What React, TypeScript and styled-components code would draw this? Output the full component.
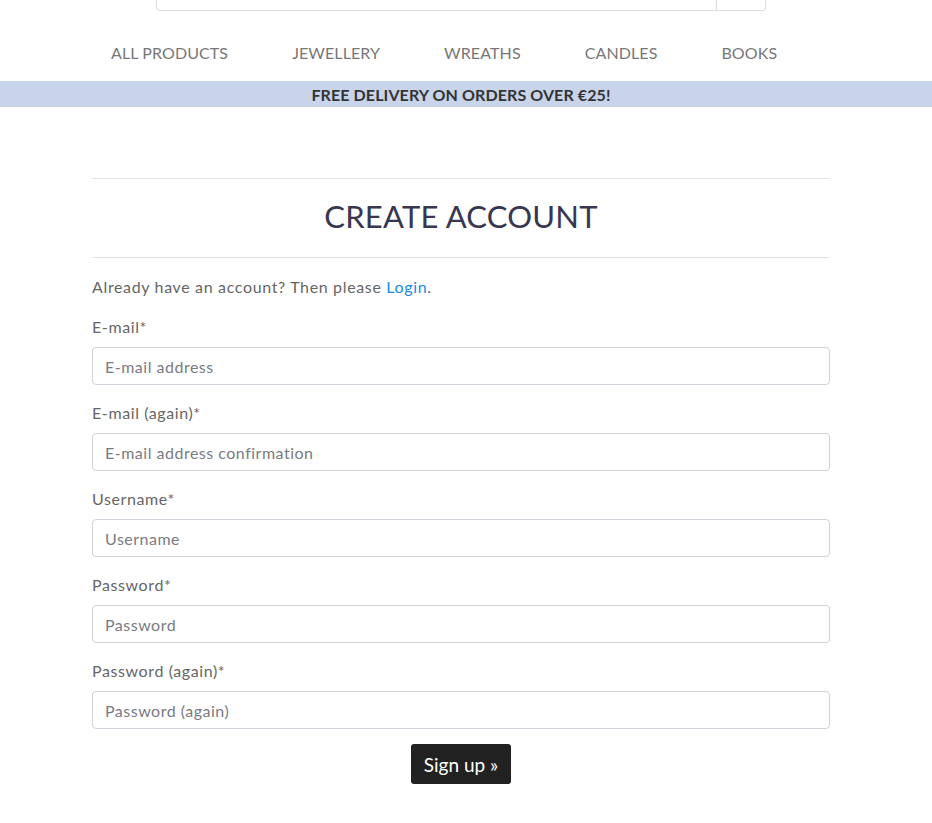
import React from "react";
import styled, { createGlobalStyle } from "styled-components";

const Global = createGlobalStyle`
  html, body { margin: 0; padding: 0; background: #fff; }
  body { font-family: Lato, "Noto Sans", sans-serif; color: #555; }
  * { box-sizing: border-box; }
`;

const Header = styled.header`
  display: flex;
  flex-direction: column;
`;

const SearchViewport = styled.div`
  height: 11px;
  overflow: hidden;
  display: flex;
  align-items: flex-end;
  padding-left: 156px;
`;

const SearchInput = styled.div`
  width: 561px;
  height: 38px;
  border: 1px solid #dcdcdc;
  border-radius: 4px 0 0 4px;
`;

const SearchButton = styled.div`
  width: 49px;
  height: 38px;
  border: 1px solid #dcdcdc;
  border-left: none;
  border-radius: 0 4px 4px 0;
`;

const Nav = styled.nav`
  display: flex;
  height: 70px;
  align-items: center;
  padding-left: 79px;
`;

const NavItem = styled.a`
  padding: 0 32px;
  font-size: 16px;
  letter-spacing: 0.1px;
  color: #777;
  text-transform: uppercase;
  text-decoration: none;
  line-height: 1;
  margin-top: 13px;
`;

const Banner = styled.div`
  height: 26px;
  background: #c8d4ea;
  display: flex;
  align-items: center;
  justify-content: center;
  padding-right: 10px;
  font-size: 16px;
  font-weight: 700;
  color: #333;
  letter-spacing: 0.1px;
`;

const Main = styled.main`
  width: 738px;
  margin: 0 0 0 92px;
  padding-top: 71px;
  display: flex;
  flex-direction: column;
`;

const Rule = styled.hr`
  border: none;
  border-top: 1px solid #e3e3e3;
  margin: 0;
`;

const Title = styled.h1`
  margin: 0;
  height: 78px;
  padding-bottom: 5px;
  display: flex;
  align-items: center;
  justify-content: center;
  font-size: 31px;
  font-weight: 400;
  color: #393651;
  letter-spacing: 0.2px;
`;

const Intro = styled.p`
  margin: 19px 0 0;
  font-size: 16px;
  line-height: 20px;
  color: #666;
  letter-spacing: 0.65px;
`;

const LoginLink = styled.a`
  color: #1e88e5;
  text-decoration: none;
`;

const Form = styled.form`
  display: flex;
  flex-direction: column;
  margin-top: 20px;
`;

const Field = styled.div`
  display: flex;
  flex-direction: column;
  margin-bottom: 18px;
`;

const Label = styled.label`
  font-size: 16px;
  line-height: 20px;
  color: #666;
  margin-bottom: 10px;
  letter-spacing: 0.6px;
`;

const Input = styled.input`
  height: 38px;
  width: 100%;
  border: 1px solid #ced4da;
  border-radius: 4px;
  padding: 0 12px;
  font-family: Lato, "Noto Sans", sans-serif;
  font-size: 16px;
  letter-spacing: 0.5px;
  color: #555;
  &::placeholder { color: #7a7a82; }
`;

const SubmitRow = styled.div`
  display: flex;
  justify-content: center;
  margin-top: -3px;
`;

const Submit = styled.button`
  height: 40px;
  padding: 0 13px;
  background: #222;
  color: #fff;
  border: none;
  border-radius: 3px;
  font-family: Lato, "Noto Sans", sans-serif;
  font-size: 19px;
`;

const fields = [
  { label: "E-mail*", placeholder: "E-mail address", type: "email" },
  { label: "E-mail (again)*", placeholder: "E-mail address confirmation", type: "email" },
  { label: "Username*", placeholder: "Username", type: "text" },
  { label: "Password*", placeholder: "Password", type: "password" },
  { label: "Password (again)*", placeholder: "Password (again)", type: "password" },
];

export default function App() {
  return (
    <>
      <Global />
      <Header>
        <SearchViewport>
          <SearchInput />
          <SearchButton />
        </SearchViewport>
        <Nav>
          {["All Products", "Jewellery", "Wreaths", "Candles", "Books"].map((n) => (
            <NavItem key={n} href="#">{n}</NavItem>
          ))}
        </Nav>
        <Banner>FREE DELIVERY ON ORDERS OVER €25!</Banner>
      </Header>
      <Main>
        <Rule />
        <Title>CREATE ACCOUNT</Title>
        <Rule />
        <Intro>
          Already have an account? Then please <LoginLink href="#">Login</LoginLink>.
        </Intro>
        <Form onSubmit={(e) => e.preventDefault()}>
          {fields.map((f) => (
            <Field key={f.label}>
              <Label>{f.label}</Label>
              <Input type={f.type} placeholder={f.placeholder} />
            </Field>
          ))}
          <SubmitRow>
            <Submit type="submit">Sign up »</Submit>
          </SubmitRow>
        </Form>
      </Main>
    </>
  );
}
